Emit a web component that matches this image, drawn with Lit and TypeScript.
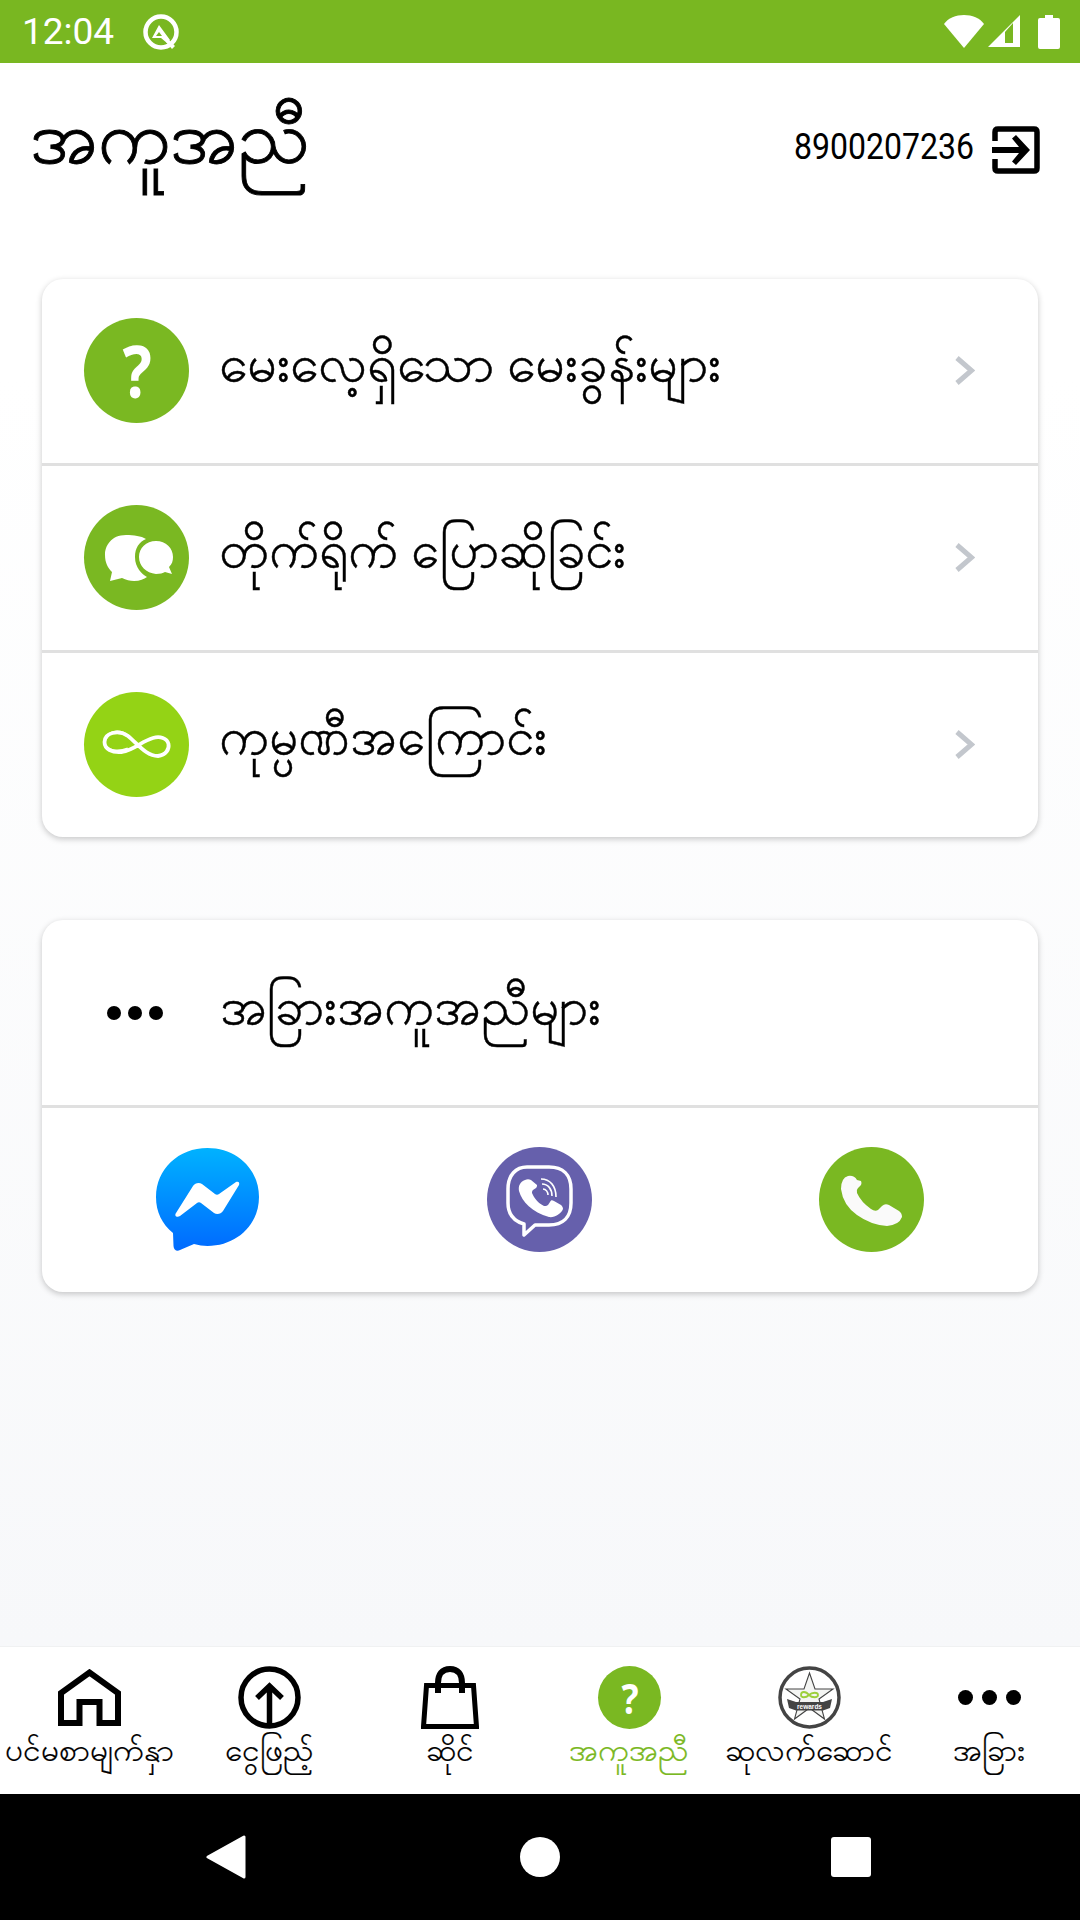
import {LitElement,html,css} from 'lit';
import {customElement} from 'lit/decorators.js';

const GREEN='#7ab822';
const chevron=html`<svg class="chev" width="21" height="31" viewBox="0 0 21 31"><path d="M3 3L17.5 15.5L3 28" fill="none" stroke="#c3c7cd" stroke-width="5"/></svg>`;
const chat=html`<svg width="105" height="105" viewBox="0 0 105 105">
<path fill="#fff" d="M42 30C27 30 21 41 21 50C21 58 24 63 28 67L26 76L38 73C42 75 46 76 50 76C56 76 60 74 63 72C58 69 51 63 51 52C51 43 55 37 62 34C57 31 50 30 42 30Z"/>
<path fill="#fff" d="M72 36C62 36 55 43 55 52C55 61 62 68 72 69C76 69 79 68 81 67L88 69L85 62C88 59 89 56 89 52C89 43 82 36 72 36Z"/></svg>`;
const inf=html`<svg width="105" height="105" viewBox="0 0 105 105">
<path fill="none" stroke="#fff" stroke-width="3.800" d="M20.500 50C20.500 41 34 37 44 44C54 52 62 64 74 64C82 63 85.500 57 84.500 52C83 46 76 44 69 46C58 49 50 58 38 60C28 61 20.500 57 20.500 50Z"/>
<path fill="none" stroke="#fff" stroke-width="3" d="M22 46C26 39 36 38 44 44M22 55C27 60 36 60 44 57"/></svg>`;
const messenger=html`<svg width="103" height="104" viewBox="0 0 103 104">
<defs><linearGradient id="mg" x1="0" y1="0" x2="0" y2="1"><stop offset="0" stop-color="#00b2ff"/><stop offset="1" stop-color="#006aff"/></linearGradient></defs>
<path fill="url(#mg)" d="M51.5 0C22.5 0 0 21 0 49C0 64 6 76 17 85L17.500 98C17.700 102 21 104 24 102L38 96C42.500 97 47 98 51.500 98C80.500 98 103 77 103 49C103 21 80.500 0 51.500 0Z"/>
<path fill="#fff" d="M20 65L37 38C39 35 43 34 46 36L59 46C60 47 62 47 63 46L80 34C82 33 84 34 83 37L67 63C65 66 61 67 58 65L45 55C44 54 42 54 41 55L24 68C21 70 18 68 20 65Z"/></svg>`;
const viber=html`<svg width="105" height="105" viewBox="0 0 105 105">
<circle cx="52.500" cy="52.500" r="52.500" fill="#6660ac"/>
<path fill="none" stroke="#fff" stroke-width="3.500" stroke-linejoin="round" d="M40 20H62C76 20 84 28 84 42V56C84 70 76 78 62 78H48L37 88V77C27 74 21 67 21 56V42C21 28 29 20 40 20Z"/>
<path fill="#fff" d="M38 33C33 35 31 39 32 44C35 55 45 65 62 70C67 71 74 67 76 62C76 60 75 59 74 58L67 54C65 53 64 53 63 55L61 58C60 59 58 59 57 59C51 56 47 51 45 46C45 45 45 44 46 43L49 41C50 40 50 39 50 38L44 33C42 32 40 32 38 33Z"/>
<path fill="none" stroke="#fff" stroke-width="1.600" d="M54 32C63 32 69 39 69 50M55 37C61 37 65 42 65 49M56 42C59 42 61 45 61 48"/></svg>`;
const phone=html`<svg width="105" height="105" viewBox="0 0 105 105">
<circle cx="52.500" cy="52.500" r="52.500" fill="${GREEN}"/>
<path fill="#fafafa" d="M29 29Q22 31 22 42Q24 58 38 68Q52 78 68 79Q80 78 83 70Q83 66 80 64L70 58Q66 56 63 59L59 63Q56 65 52 62Q42 55 38 46Q37 43 39 41L42 38Q43 36 42 34L38 33Q35 28 29 29Z"/></svg>`;
const home=html`<svg width="63" height="57" viewBox="0 0 63 57"><path fill="none" stroke="#000" stroke-width="6" stroke-linejoin="miter" d="M3 54V24L31.500 3.500L60 24V54H41.500V33H21.500V54Z"/></svg>`;
const upload=html`<svg width="63" height="63" viewBox="0 0 63 63"><circle cx="31.500" cy="31.500" r="28.500" fill="none" stroke="#000" stroke-width="5.500"/><path fill="none" stroke="#000" stroke-width="5.500" d="M31.500 62V20M19 32L31.500 20L44 32"/></svg>`;
const bag=html`<svg width="58" height="63" viewBox="0 0 58 63"><path fill="none" stroke="#000" stroke-width="5" d="M5.500 19.500H52.500L55.500 60.500H2.500Z"/><path fill="none" stroke="#000" stroke-width="6" d="M17 27V17C17 8 21 3 29 3C37 3 41 8 41 17V27"/></svg>`;
const rewards=html`<svg width="63" height="63" viewBox="0 0 63 63">
<circle cx="31.500" cy="31.500" r="29.500" fill="#fff" stroke="#444" stroke-width="3.500"/>
<path fill="#f4f5f3" stroke="#444" stroke-width="1.100" d="M31.500 7L37 23H55L41 33L46.500 53L31.500 42L16.500 53L22 33L8 23H26Z"/>
<path fill="none" stroke="#9ccf3a" stroke-width="1.800" d="M23 29C23 25 28 25 31 29C34 32 40 32 40 29C40 26 34 26 31 29C28 32 23 32 23 29Z"/>
<path fill="#444" d="M9 33L18 36H45L54 33L52 42L45 44.500H18L11 42Z"/>
<text x="31.500" y="42.500" text-anchor="middle" class="rw">rewards</text></svg>`;
const logout=html`<svg width="48" height="48" viewBox="0 0 48 48"><path fill="none" stroke="#000" stroke-width="5.500" d="M3 15V6Q3 3 6 3H42Q45 3 45 6V42Q45 45 42 45H6Q3 45 3 42V33"/><path fill="#000" d="M0 21H27L20 12.500L24 9L38 24L24 39L20 35.500L27 27H0Z"/></svg>`;

@customElement('app-root')
export class AppRoot extends LitElement{
static styles=css`
:host{display:block;font-family:"Noto Sans","DejaVu Sans",sans-serif;color:#000}
.page{width:1080px;height:1920px;display:flex;flex-direction:column;overflow:hidden}
.status{height:63px;background:#79b721;color:#fff;display:flex;align-items:center;padding:0 20px 0 22px;box-sizing:border-box;flex:none}
.time{font:37px/63px Roboto,sans-serif;width:120px}
.sicons{margin-left:auto;display:flex;align-items:center}
.main{flex:1;background:linear-gradient(#fff 0,#fff 20%,#f7f8fa 100%);display:flex;flex-direction:column;padding:0 42px;box-sizing:border-box;min-height:0}
.head{height:216px;display:flex;align-items:center;margin:0 -42px;padding:0 40px 0 30px;flex:none}
.title{font-size:74px;line-height:100px;margin-top:-72px;-webkit-text-stroke:.9px #000}
.acct{margin-left:auto;display:flex;align-items:center;gap:18px;margin-top:-42px}
.num{font:36px/48px Roboto,sans-serif;width:180px;white-space:nowrap;transform:scaleX(.89) translateY(-3px);transform-origin:left center}
.card{background:#fff;border-radius:21px;box-shadow:0 2px 6px rgba(0,0,0,.22);overflow:hidden;flex:none}
.card+.card{margin-top:83px}
.row{height:184px;display:flex;align-items:center;padding:0 63px 2px 42px;position:relative;box-sizing:border-box}
.row+.row{border-top:3px solid #e0e0e0;height:187px}
.lbl{font-size:51.700px;line-height:80px;margin:-18px 0 0 30px;white-space:nowrap;flex:1;-webkit-text-stroke:.45px #000}
.lbl.n{font-size:50.800px}
.lbl.other{margin:-14px 0 0 33px;font-size:50.500px}
.big{height:185px}
.circ{width:105px;height:105px;border-radius:50%;background:#7ab822;display:flex;align-items:center;justify-content:center;flex:none;color:#fff}
.circ.lime{background:#94d315}
.q{font:700 72px/105px "Noto Sans",sans-serif;transform:scaleX(.85);display:block;margin-left:2px}
.dots3{width:105px;display:flex;justify-content:center;gap:7px;flex:none;margin:2px 0 0 -2px}
.dots3 i{width:14px;height:14px;border-radius:50%;background:#000}
.apps{display:flex;height:187px;align-items:center;border-top:3px solid #e0e0e0;box-sizing:border-box;padding:0 1px 1px 0}
.apps div{flex:1;display:flex;justify-content:center}
.apps svg,.nav svg,.status svg,.sys svg{display:block}
.nav{height:148px;flex:none;background:#fff;display:flex;border-top:1px solid #f0f1f2;box-sizing:border-box;padding-right:1px}
.item{flex:1;min-width:0;display:flex;flex-direction:column;align-items:center;position:relative;padding-top:19px}
.ic{height:63px;display:flex;align-items:center;justify-content:center}
.nl{font-size:31.500px;line-height:50px;white-space:nowrap;margin-top:-5px;-webkit-text-stroke:.2px currentColor}
.item.on .nl{color:#7ab822}
.circ.sm{width:63px;height:63px}
.circ.sm .q{font-size:42px;line-height:63px;margin-left:1px}
.d{display:flex;gap:9px}
.d i{width:15px;height:15px;border-radius:50%;background:#000}
.rw{font:700 6.500px "Liberation Sans",sans-serif;fill:#fff}
.sys{height:126px;background:#000;flex:none;position:relative}
.sys>div{position:absolute;top:0;height:100%;display:flex;align-items:center}
`;
render(){return html`<div class="page">
<div class="status">
 <div class="time">12:04</div>
 <svg width="38" height="38" viewBox="0 0 38 38"><circle cx="19" cy="19" r="15.500" fill="none" stroke="#fff" stroke-width="4.500"/><path fill="#fff" d="M17 12L28 27L25 30L19 25H10Z"/><path fill="#79b721" d="M17 19L20 23H14Z"/><path fill="#fff" d="M26 26L33 33L30 36L24 29Z"/></svg>
 <div class="sicons">
  <svg width="40" height="33" viewBox="0 0 40 33"><path fill="#fff" d="M0 9C4 3 12 0 20 0C28 0 36 3 40 9L20 33Z"/></svg>
  <svg style="margin-left:3px" width="33" height="33" viewBox="0 0 33 33"><path fill="#fff" fill-rule="evenodd" d="M1 32L33 0V32ZM18 17L26 8V28H18Z"/></svg>
  <svg style="margin-left:18px" width="22" height="34" viewBox="0 0 22 34"><path fill="#fff" d="M7 0H15V3H20Q22 3 22 5V32Q22 34 20 34H2Q0 34 0 32V5Q0 3 2 3H7Z"/></svg>
 </div>
</div>
<div class="main">
 <div class="head"><div class="title">အကူအညီ</div>
  <div class="acct"><div class="num">8900207236</div>${logout}</div></div>
 <div class="card">
  <div class="row"><div class="circ"><span class="q">?</span></div><div class="lbl">မေးလေ့ရှိသော မေးခွန်းများ</div>${chevron}</div>
  <div class="row"><div class="circ">${chat}</div><div class="lbl n">တိုက်ရိုက် ပြောဆိုခြင်း</div>${chevron}</div>
  <div class="row"><div class="circ lime">${inf}</div><div class="lbl n">ကုမ္ပဏီအကြောင်း</div>${chevron}</div>
 </div>
 <div class="card">
  <div class="row big"><div class="dots3"><i></i><i></i><i></i></div><div class="lbl other">အခြားအကူအညီများ</div></div>
  <div class="apps"><div>${messenger}</div><div>${viber}</div><div>${phone}</div></div>
 </div>
</div>
<div class="nav">
 <div class="item"><div class="ic">${home}</div><div class="nl">ပင်မစာမျက်နှာ</div></div>
 <div class="item"><div class="ic">${upload}</div><div class="nl">ငွေဖြည့်</div></div>
 <div class="item"><div class="ic">${bag}</div><div class="nl">ဆိုင်</div></div>
 <div class="item on"><div class="ic"><div class="circ sm"><span class="q">?</span></div></div><div class="nl">အကူအညီ</div></div>
 <div class="item"><div class="ic">${rewards}</div><div class="nl">ဆုလက်ဆောင်</div></div>
 <div class="item"><div class="ic"><div class="d"><i></i><i></i><i></i></div></div><div class="nl">အခြား</div></div>
</div>
<div class="sys">
 <div style="left:206px"><svg width="40" height="44" viewBox="0 0 40 44"><path fill="#fff" stroke="#fff" stroke-width="3" stroke-linejoin="round" d="M38 2V42L2 22Z"/></svg></div>
 <div style="left:520px"><svg width="40" height="40" viewBox="0 0 40 40"><circle cx="20" cy="20" r="20" fill="#fff"/></svg></div>
 <div style="left:831px"><svg width="40" height="40" viewBox="0 0 40 40"><rect width="40" height="40" rx="3" fill="#fff"/></svg></div>
</div>
</div>`}
}
